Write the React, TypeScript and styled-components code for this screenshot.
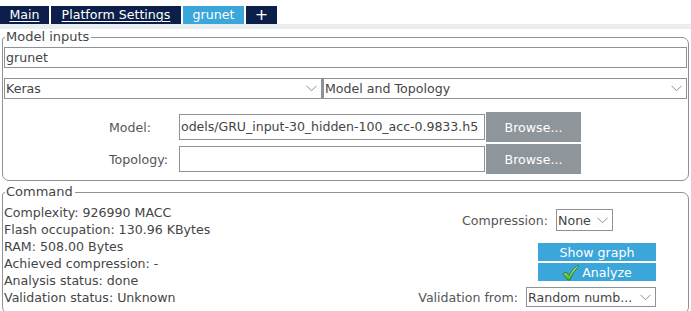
import React from 'react';
import styled, { createGlobalStyle } from 'styled-components';

const GlobalStyle = createGlobalStyle`
  html, body {
    margin: 0;
    padding: 0;
    background: #ffffff;
  }
  body {
    font-family: "DejaVu Sans", Verdana, sans-serif;
    font-size: 12.6px;
    color: #454545;
  }
`;

const tabs = [
  { label: 'Main', width: 49, link: true },
  { label: 'Platform Settings', width: 130, link: true },
  { label: 'grunet', width: 61, active: true },
  { label: '+', width: 31 },
];

const stats = [
  'Complexity: 926990 MACC',
  'Flash occupation: 130.96 KBytes',
  'RAM: 508.00 Bytes',
  'Achieved compression: -',
  'Analysis status: done',
  'Validation status: Unknown',
];

const Chevron = () => (
  <svg width="11" height="7" viewBox="0 0 11 7">
    <polyline points="0.5,0.8 5.5,5.8 10.5,0.8" fill="none" stroke="#8a8f93" strokeWidth="1" />
  </svg>
);

const CheckIcon = () => (
  <svg width="17" height="17" viewBox="0 0 17 17">
    <defs>
      <linearGradient id="chk" x1="0" y1="0" x2="0" y2="1">
        <stop offset="0" stopColor="#c4f5ae" />
        <stop offset="1" stopColor="#46b52f" />
      </linearGradient>
    </defs>
    <path
      d="M1 10 Q2.5 8.3 4.3 8 L6.8 11.4 Q10.5 4.6 15.8 1.2 L16.3 2.6 Q11.4 7.4 7.8 16 L5.9 16 Z"
      fill="url(#chk)"
      stroke="#2f7f22"
      strokeWidth="1"
      strokeLinejoin="round"
    />
  </svg>
);

export default function App() {
  return (
    <Page>
      <GlobalStyle />
      <TabBar>
        {tabs.map((t) => (
          <Tab key={t.label} width={t.width} active={t.active} link={t.link}>
            {t.label}
          </Tab>
        ))}
      </TabBar>
      <Strip />
      <Content>
        <Group>
          <Legend>Model inputs</Legend>
          <TextBox>grunet</TextBox>
          <SelectRow>
            <Select>
              <span>Keras</span>
              <Chevron />
            </Select>
            <Select>
              <span>Model and Topology</span>
              <Chevron />
            </Select>
          </SelectRow>
          <FileGrid>
            <FieldLabel>Model:</FieldLabel>
            <PathBox>odels/GRU_input-30_hidden-100_acc-0.9833.h5</PathBox>
            <BrowseButton>Browse...</BrowseButton>
            <FieldLabel>Topology:</FieldLabel>
            <PathBox />
            <BrowseButton>Browse...</BrowseButton>
          </FileGrid>
        </Group>
        <Group>
          <Legend>Command</Legend>
          <CommandBody>
            <Stats>
              {stats.map((s) => (
                <StatLine key={s}>{s}</StatLine>
              ))}
            </Stats>
            <Actions>
              <OptionRow offset={43}>
                <OptionLabel>Compression:</OptionLabel>
                <SmallSelect width={57} tall>
                  <span>None</span>
                  <Chevron />
                </SmallSelect>
              </OptionRow>
              <ButtonStack>
                <ActionButton>Show graph</ActionButton>
                <ActionButton>
                  <CheckIcon />
                  Analyze
                </ActionButton>
              </ButtonStack>
              <OptionRow offset={0}>
                <OptionLabel>Validation from:</OptionLabel>
                <SmallSelect width={130}>
                  <span>Random numb...</span>
                  <Chevron />
                </SmallSelect>
              </OptionRow>
            </Actions>
          </CommandBody>
        </Group>
      </Content>
    </Page>
  );
}

const Page = styled.div`
  width: 691px;
  height: 311px;
  overflow: hidden;
`;

const TabBar = styled.div`
  display: flex;
  gap: 2px;
  padding-top: 6px;
`;

const Tab = styled.div<{ width: number; active?: boolean; link?: boolean }>`
  width: ${(p) => p.width}px;
  height: 18px;
  line-height: 18px;
  text-align: center;
  font-size: 12.6px;
  color: #ffffff;
  background: ${(p) => (p.active ? '#3aa6da' : '#0b1f4a')};
  text-decoration: ${(p) => (p.link ? 'underline' : 'none')};
  text-underline-offset: 2px;
  &:last-child {
    font-size: 16px;
  }
`;

const Strip = styled.div`
  height: 5px;
  background: #e9edf0;
`;

const Content = styled.div`
  padding: 0 2px;
`;

const Group = styled.fieldset`
  margin: 1px 0 0;
  padding: 3px 1px 6px;
  border: 1px solid #8c9295;
  border-radius: 3px 7px 7px 7px;
  min-width: 0;
  & + & {
    margin-top: 4px;
  }
`;

const Legend = styled.legend`
  padding: 0 2px 0 1px;
  margin-left: 1px;
  font-size: 13px;
  line-height: 14px;
`;

const TextBox = styled.div`
  height: 19px;
  line-height: 19px;
  border: 1px solid #8c9295;
  padding: 0 1px;
`;

const SelectRow = styled.div`
  display: grid;
  grid-template-columns: 318px 1fr;
  margin-top: 10px;
`;

const Select = styled.div`
  display: flex;
  align-items: center;
  justify-content: space-between;
  height: 19px;
  border: 1px solid #8c9295;
  padding: 0 4px 0 1px;
  & + & {
    border-left-width: 2px;
  }
`;

const FileGrid = styled.div`
  display: grid;
  grid-template-columns: 70px 306px 96px;
  grid-auto-rows: 30px;
  row-gap: 2px;
  align-items: center;
  padding-left: 105px;
  margin-top: 13px;
`;

const FieldLabel = styled.div`
  color: #555555;
`;

const PathBox = styled.div`
  height: 24px;
  line-height: 24px;
  border: 1px solid #8c9295;
  overflow: hidden;
  white-space: nowrap;
  padding-left: 1px;
  letter-spacing: -0.05px;
`;

const BrowseButton = styled.div`
  height: 30px;
  margin-left: 1px;
  background: #8f969b;
  color: #ffffff;
  display: flex;
  align-items: center;
  justify-content: center;
`;

const CommandBody = styled.div`
  display: flex;
  justify-content: space-between;
  padding-top: 2px;
`;

const Stats = styled.div`
  display: flex;
  flex-direction: column;
`;

const StatLine = styled.div`
  line-height: 17px;
  white-space: nowrap;
`;

const Actions = styled.div`
  display: flex;
  flex-direction: column;
  align-items: flex-end;
  padding-right: 31px;
  padding-top: 5px;
`;

const OptionRow = styled.div<{ offset: number }>`
  display: flex;
  align-items: center;
  gap: 8px;
  margin-right: ${(p) => p.offset}px;
  & + * {
    margin-top: 12px;
  }
`;

const OptionLabel = styled.span`
  color: #555555;
`;

const SmallSelect = styled.div<{ width: number; tall?: boolean }>`
  width: ${(p) => p.width}px;
  box-sizing: border-box;
  height: ${(p) => (p.tall ? 22 : 20)}px;
  border: 1px solid #8c9295;
  padding: 0 4px 0 1px;
  display: flex;
  align-items: center;
  justify-content: space-between;
`;

const ButtonStack = styled.div`
  display: flex;
  flex-direction: column;
  gap: 2px;
  width: 118px;
  margin-bottom: 6px;
`;

const ActionButton = styled.div`
  height: 18px;
  background: #3aa6da;
  color: #ffffff;
  display: flex;
  align-items: center;
  justify-content: center;
  gap: 3px;
`;
